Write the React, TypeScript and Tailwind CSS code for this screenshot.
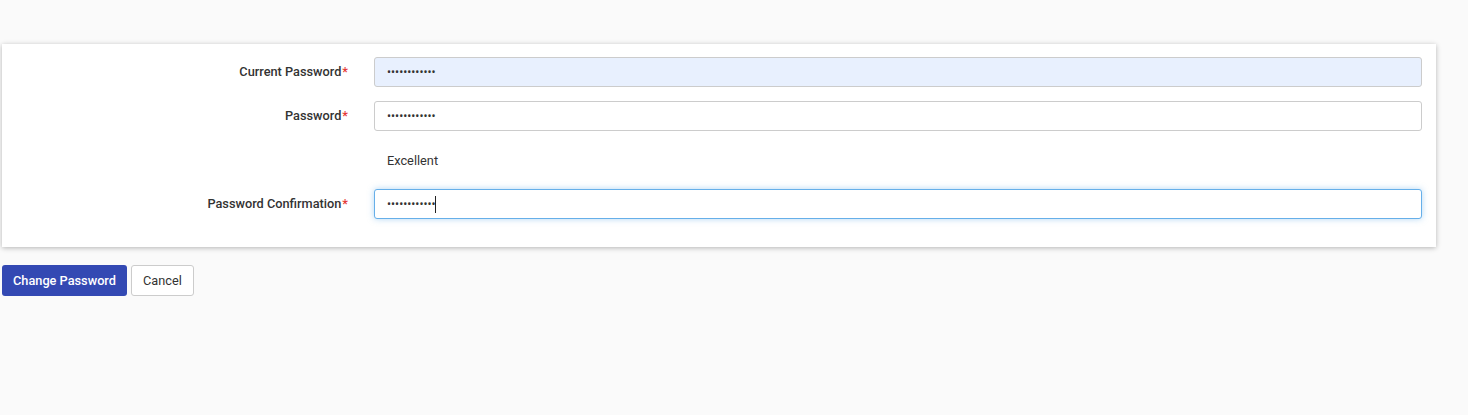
import React from "react";

const fields = [
  { label: "Current Password", filled: true },
  { label: "Password", filled: false },
];

const Label = ({ text }: { text: string }) => (
  <label className="w-[346px] shrink-0 text-right text-[12.75px] font-medium text-[#333]">
    {text}
    <span className="ml-px text-[#e53935]">*</span>
  </label>
);

const App = () => {
  return (
    <div
      className="min-h-[415px] bg-[#fafafa] pt-[44px]"
      style={{ fontFamily: "Roboto, 'Liberation Sans', sans-serif" }}
    >
      <div className="ml-[2px] w-[1434px] bg-white pt-[13px] pb-[28px] pr-[14px] shadow-[0_1px_5px_rgba(0,0,0,0.28)]">
        {fields.map((f) => (
          <div key={f.label} className="mb-[14px] flex items-center gap-[26px]">
            <Label text={f.label} />
            <input
              type="password"
              readOnly
              value="abcdefghijkl"
              className={`h-[30px] flex-1 rounded-[3px] border border-[#ccc] px-3 text-[12px] text-[#333] outline-none ${
                f.filled ? "bg-[#e8f0fe]" : "bg-white"
              }`}
            />
          </div>
        ))}
        <div className="flex h-[30px] items-center pt-[2px]">
          <span className="ml-[385px] text-[12.75px] text-[#333]">Excellent</span>
        </div>
        <div className="mt-[14px] flex items-center gap-[26px]">
          <Label text="Password Confirmation" />
          <div className="relative flex-1">
            <input
              type="password"
              readOnly
              value="abcdefghijkl"
              className="h-[30px] w-full rounded-[3px] border border-[#66afe9] bg-white px-3 text-[12px] text-[#333] outline-none shadow-[0_0_6px_rgba(102,175,233,0.5)]"
            />
            <span className="absolute left-[61px] top-[7px] h-[17px] w-px bg-[#222]" />
          </div>
        </div>
      </div>
      <div className="mt-[18px] ml-[2px] flex gap-[4px]">
        <button className="h-[31px] rounded-[3px] bg-[#3349b3] px-[11px] text-[12.75px] font-medium text-white">
          Change Password
        </button>
        <button className="h-[31px] rounded-[3px] border border-[#ccc] bg-white px-[11px] text-[12.75px] text-[#333]">
          Cancel
        </button>
      </div>
    </div>
  );
};

export default App;
